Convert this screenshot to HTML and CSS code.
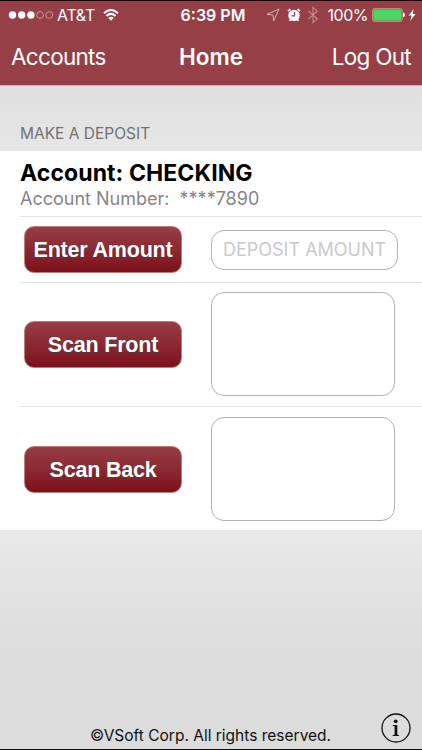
FILE: index.html
```html
<!DOCTYPE html>
<html lang="en">
    <head>
        <meta charset="utf-8">
        <title>Home</title>
        <link rel="stylesheet" href="styles.css">
    </head>

    <body>
        <div class="screen">
            <header>
                <div class="status">
                    <div class="carrier">
                        <svg class="signal" width="46" height="10" viewBox="0 0 46 10">
                            <circle cx="4.5" cy="5" r="3.7"/>
                            <circle cx="13.7" cy="5" r="3.7"/>
                            <circle cx="22.9" cy="5" r="3.7"/>
                            <circle class="empty" cx="32.1" cy="5" r="3.4"/>
                            <circle class="empty" cx="41.3" cy="5" r="3.4"/>
                        </svg>
                        <span class="network">AT&amp;T</span>
                        <svg class="wifi" width="16" height="12" viewBox="0 0 16 12">
                            <path d="M1 4.2Q8 -2.2 15 4.2M3.4 7Q8 2.8 12.6 7"/>
                            <path class="solid" d="M8 11.7L5.2 8.9Q8 6.6 10.8 8.9z"/>
                        </svg>
                    </div>
                    <span class="time">6:39 PM</span>
                    <div class="indicators">
                        <svg class="location" width="14" height="14" viewBox="0 0 14 14">
                            <path d="M13 1L1 6.3L7 7.1L7.7 13z"/>
                        </svg>
                        <svg class="alarm" width="14" height="14" viewBox="0 0 14 14">
                            <circle cx="7" cy="7.4" r="5.7"/>
                            <path class="bell" d="M1 3.2L3.3 1.2M13 3.2L10.7 1.2M3.4 11.6L2.6 12.9M10.6 11.6L11.4 12.9"/>
                            <path class="hands" d="M7.5 3.8V7.9H4.5"/>
                        </svg>
                        <svg class="bluetooth" width="12" height="18" viewBox="0 0 12 18">
                            <path d="M1.2 4.8L10.3 12.8L6 16.6V1.4L10.3 5.2L1.2 13.2"/>
                        </svg>
                        <span class="percent">100%</span>
                        <svg class="battery" width="34" height="14" viewBox="0 0 34 14">
                            <rect class="case" x=".7" y=".7" width="29.4" height="12.6" rx="1.5"/>
                            <rect class="charge" x="1.4" y="1.4" width="28" height="11.2" rx="1"/>
                            <path class="cap" d="M31 4.6Q33 5 33 7T31 9.4z"/>
                        </svg>
                        <svg class="bolt" width="8" height="14" viewBox="0 0 8 14">
                            <path d="M5.7 1L.6 7.5H3.5L2.2 13L7.5 5.9H4.6z"/>
                        </svg>
                    </div>
                </div>
                <nav>
                    <a class="accounts">Accounts</a>
                    <h1>Home</h1>
                    <a class="logout">Log Out</a>
                </nav>
            </header>

            <main>
                <h2>MAKE A DEPOSIT</h2>
                <div class="deposit">
                    <div class="row account">
                        <div class="name">Account: CHECKING</div>
                        <div class="number">Account Number:&nbsp; ****7890</div>
                    </div>
                    <div class="row amount">
                        <button>Enter Amount</button>
                        <input type="text" placeholder="DEPOSIT AMOUNT">
                    </div>
                    <div class="row scan front">
                        <button>Scan Front</button>
                        <div class="preview"></div>
                    </div>
                    <div class="row scan">
                        <button>Scan Back</button>
                        <div class="preview"></div>
                    </div>
                </div>
            </main>

            <footer>
                <span class="copyright">©VSoft Corp. All rights reserved.</span>
                <svg class="info" width="30" height="30" viewBox="0 0 30 30">
                    <circle class="ring" cx="15" cy="15" r="14"/>
                    <circle cx="14.7" cy="8.3" r="1.9"/>
                    <path d="M11.7 11.9H16.3V21.6L18 22.2V22.9H11.7V22.2L13.6 21.6V13.2L11.7 12.7z"/>
                </svg>
            </footer>
        </div>
    </body>
</html>
```

FILE: styles.css
```css
* {
    box-sizing: border-box;
}

body {
    margin: 0;
    font-family: Inter, "Liberation Sans", sans-serif;
}

.screen {
    display: flex;
    flex-direction: column;
    height: 750px;
    border-top: 1px solid #180004;
    border-bottom: 1px solid #111;
    background: linear-gradient(#dfdfdf 11%, #e6e6e6 20%, #e8e8e8 71%, #dcdcdc 88%);
    overflow: hidden;
}

header {
    height: 85px;
    background-color: #963f47;
    border-bottom: 1px solid #d5a9ae;
    color: white;
}

.status {
    display: grid;
    grid-template-columns: 1fr auto 1fr;
    align-items: center;
    height: 27px;
    padding: 0 6px 0 8px;
}

.carrier, .indicators {
    display: flex;
    align-items: center;
}

.indicators {
    justify-content: flex-end;
}

svg {
    display: block;
    flex: none;
    fill: none;
}

.signal {
    fill: white;
}

.signal .empty {
    fill: none;
    stroke: #d7a9ad;
    stroke-width: .8;
}

.network {
    margin-left: 3px;
    font-size: 16px;
    letter-spacing: -.3px;
}

.wifi {
    margin-left: 8px;
    stroke: white;
    stroke-width: 2;
}

.wifi .solid {
    fill: white;
    stroke: none;
}

.time {
    position: relative;
    left: 1px;
    font-size: 16px;
    font-weight: 600;
}

.location {
    stroke: #deb6ba;
    stroke-width: .9;
}

.alarm {
    margin-left: 7px;
    fill: white;
}

.alarm .bell {
    stroke: white;
    stroke-width: 1.7;
}

.alarm .hands {
    fill: none;
    stroke: #963f47;
    stroke-width: 1.2;
}

.bluetooth {
    margin-left: 6px;
    stroke: #c78d92;
    stroke-width: 1.1;
}

.percent {
    margin-left: 9px;
    font-size: 16px;
    letter-spacing: -.5px;
}

.battery {
    margin-left: 4px;
}

.battery .case {
    stroke: #c6a28b;
}

.battery .charge {
    fill: #4bd763;
}

.battery .cap {
    fill: white;
}

.bolt {
    margin-left: 2px;
    fill: white;
}

nav {
    display: grid;
    grid-template-columns: 1fr auto 1fr;
    align-items: baseline;
    height: 57px;
    padding: 15px 11px 0;
    font-size: 22.5px;
    line-height: 27px;
    letter-spacing: -.7px;
}

nav h1 {
    margin: 0;
    font-size: 22.5px;
    font-weight: 600;
    letter-spacing: 0;
}

.logout {
    text-align: right;
}

h2 {
    height: 65px;
    margin: 0;
    padding: 38px 20px 0;
    color: #717174;
    font-size: 15.5px;
    font-weight: normal;
    line-height: 20px;
}

.deposit {
    height: 379px;
    padding-left: 20px;
    background-color: white;
}

.row {
    display: flex;
    align-items: center;
    border-bottom: 1px solid #e4e4e4;
}

.row:last-child {
    border: none;
}

.account {
    flex-direction: column;
    align-items: flex-start;
    height: 66px;
    padding-top: 8px;
}

.name {
    font-size: 23px;
    font-weight: 700;
    line-height: 28px;
    letter-spacing: .1px;
    white-space: nowrap;
}

.number {
    color: #858585;
    font-size: 18px;
    line-height: 23px;
    white-space: nowrap;
}

.amount {
    height: 66px;
}

.scan {
    height: 124px;
}

.front .preview {
    margin-bottom: 2px;
}

button {
    width: 158px;
    height: 47px;
    margin: 0 29px 0 4px;
    padding: 2px 0 0;
    border: 1px solid #b98178;
    border-radius: 10px;
    background: linear-gradient(#963d45, #8b2932 50%, #7d101a);
    color: white;
    font: bold 21.5px "Liberation Sans", Arial, sans-serif;
    letter-spacing: -.2px;
    text-shadow: 0 1px 1px #444;
}

input {
    width: 187px;
    height: 40px;
    padding: 0 0 0 11px;
    border: 1px solid #b5b5b8;
    border-radius: 13px;
    background-color: white;
    font: 18px Inter, sans-serif;
}

input::placeholder {
    color: #c9c9ce;
}

.preview {
    width: 184px;
    height: 104px;
    border: 1px solid #b2b2b2;
    border-radius: 13px;
}

footer {
    display: flex;
    align-items: flex-end;
    justify-content: space-between;
    margin-top: auto;
    padding: 0 11px 6px 90px;
    color: #111;
}

.copyright {
    margin-bottom: -1px;
    font-size: 15.5px;
    line-height: 16px;
    white-space: nowrap;
}

.info {
    fill: #111;
}

.info .ring {
    fill: none;
    stroke: #111;
    stroke-width: 1.3;
}
```
